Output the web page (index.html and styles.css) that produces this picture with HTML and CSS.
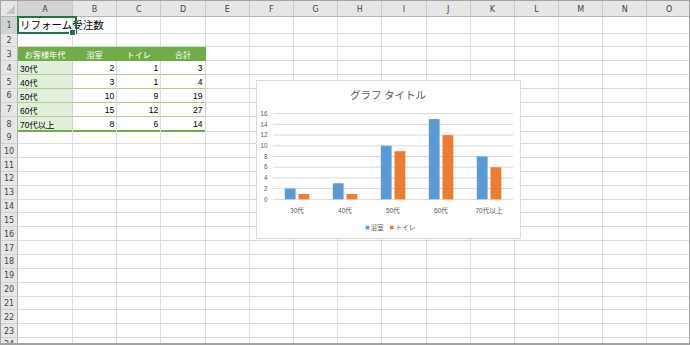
FILE: index.html
```html
<!DOCTYPE html>
<html lang="ja">
<head>
<meta charset="utf-8">
<title>リフォーム受注数</title>
<link rel="stylesheet" href="styles.css">
</head>
<body>
<div class="sheet">
  <div class="row hdr"><b class="corner"></b><b class="on">A</b><b>B</b><b>C</b><b>D</b><b>E</b><b>F</b><b>G</b><b>H</b><b>I</b><b>J</b><b>K</b><b>L</b><b>M</b><b>N</b><b>O</b></div>
  <div class="row r1"><b class="on">1</b><i class="sel">リフォーム受注数</i><i></i><i></i><i></i><i></i><i></i><i></i><i></i><i></i><i></i><i></i><i></i><i></i><i></i><i></i></div>
  <div class="row"><b>2</b><i></i><i></i><i></i><i></i><i></i><i></i><i></i><i></i><i></i><i></i><i></i><i></i><i></i><i></i><i></i></div>
  <div class="row"><b>3</b><i class="th">お客様年代</i><i class="th">浴室</i><i class="th">トイレ</i><i class="th">合計</i><i></i><i></i><i></i><i></i><i></i><i></i><i></i><i></i><i></i><i></i><i></i></div>
  <div class="row"><b>4</b><i class="ca">30代</i><i class="n">2</i><i class="n">1</i><i class="n">3</i><i></i><i></i><i></i><i></i><i></i><i></i><i></i><i></i><i></i><i></i><i></i></div>
  <div class="row"><b>5</b><i class="ca">40代</i><i class="n">3</i><i class="n">1</i><i class="n">4</i><i></i><i></i><i></i><i></i><i></i><i></i><i></i><i></i><i></i><i></i><i></i></div>
  <div class="row"><b>6</b><i class="ca">50代</i><i class="n">10</i><i class="n">9</i><i class="n">19</i><i></i><i></i><i></i><i></i><i></i><i></i><i></i><i></i><i></i><i></i><i></i></div>
  <div class="row"><b>7</b><i class="ca">60代</i><i class="n">15</i><i class="n">12</i><i class="n">27</i><i></i><i></i><i></i><i></i><i></i><i></i><i></i><i></i><i></i><i></i><i></i></div>
  <div class="row"><b>8</b><i class="ca last">70代以上</i><i class="n last">8</i><i class="n last">6</i><i class="n last">14</i><i></i><i></i><i></i><i></i><i></i><i></i><i></i><i></i><i></i><i></i><i></i></div>
  <div class="row"><b>9</b><i></i><i></i><i></i><i></i><i></i><i></i><i></i><i></i><i></i><i></i><i></i><i></i><i></i><i></i><i></i></div>
  <div class="row"><b>10</b><i></i><i></i><i></i><i></i><i></i><i></i><i></i><i></i><i></i><i></i><i></i><i></i><i></i><i></i><i></i></div>
  <div class="row"><b>11</b><i></i><i></i><i></i><i></i><i></i><i></i><i></i><i></i><i></i><i></i><i></i><i></i><i></i><i></i><i></i></div>
  <div class="row"><b>12</b><i></i><i></i><i></i><i></i><i></i><i></i><i></i><i></i><i></i><i></i><i></i><i></i><i></i><i></i><i></i></div>
  <div class="row"><b>13</b><i></i><i></i><i></i><i></i><i></i><i></i><i></i><i></i><i></i><i></i><i></i><i></i><i></i><i></i><i></i></div>
  <div class="row"><b>14</b><i></i><i></i><i></i><i></i><i></i><i></i><i></i><i></i><i></i><i></i><i></i><i></i><i></i><i></i><i></i></div>
  <div class="row"><b>15</b><i></i><i></i><i></i><i></i><i></i><i></i><i></i><i></i><i></i><i></i><i></i><i></i><i></i><i></i><i></i></div>
  <div class="row"><b>16</b><i></i><i></i><i></i><i></i><i></i><i></i><i></i><i></i><i></i><i></i><i></i><i></i><i></i><i></i><i></i></div>
  <div class="row"><b>17</b><i></i><i></i><i></i><i></i><i></i><i></i><i></i><i></i><i></i><i></i><i></i><i></i><i></i><i></i><i></i></div>
  <div class="row"><b>18</b><i></i><i></i><i></i><i></i><i></i><i></i><i></i><i></i><i></i><i></i><i></i><i></i><i></i><i></i><i></i></div>
  <div class="row"><b>19</b><i></i><i></i><i></i><i></i><i></i><i></i><i></i><i></i><i></i><i></i><i></i><i></i><i></i><i></i><i></i></div>
  <div class="row"><b>20</b><i></i><i></i><i></i><i></i><i></i><i></i><i></i><i></i><i></i><i></i><i></i><i></i><i></i><i></i><i></i></div>
  <div class="row"><b>21</b><i></i><i></i><i></i><i></i><i></i><i></i><i></i><i></i><i></i><i></i><i></i><i></i><i></i><i></i><i></i></div>
  <div class="row"><b>22</b><i></i><i></i><i></i><i></i><i></i><i></i><i></i><i></i><i></i><i></i><i></i><i></i><i></i><i></i><i></i></div>
  <div class="row"><b>23</b><i></i><i></i><i></i><i></i><i></i><i></i><i></i><i></i><i></i><i></i><i></i><i></i><i></i><i></i><i></i></div>
  <div class="row"><b>24</b><i></i><i></i><i></i><i></i><i></i><i></i><i></i><i></i><i></i><i></i><i></i><i></i><i></i><i></i><i></i></div>

  <div class="chart">
    <svg class="plot" width="263" height="157" viewBox="0 0 263 157">
      <text class="title" x="131" y="18" text-anchor="middle">グラフ タイトル</text>
      <g class="grid">
        <line x1="16" y1="32.7" x2="256" y2="32.7"/>
        <line x1="16" y1="43.4" x2="256" y2="43.4"/>
        <line x1="16" y1="54.1" x2="256" y2="54.1"/>
        <line x1="16" y1="64.8" x2="256" y2="64.8"/>
        <line x1="16" y1="75.5" x2="256" y2="75.5"/>
        <line x1="16" y1="86.2" x2="256" y2="86.2"/>
        <line x1="16" y1="96.9" x2="256" y2="96.9"/>
        <line x1="16" y1="107.6" x2="256" y2="107.6"/>
        <line x1="16" y1="118.3" x2="256" y2="118.3"/>
      </g>
      <g class="ylab" text-anchor="end">
        <text x="10.5" y="34.9">16</text>
        <text x="10.5" y="45.6">14</text>
        <text x="10.5" y="56.3">12</text>
        <text x="10.5" y="67">10</text>
        <text x="10.5" y="77.7">8</text>
        <text x="10.5" y="88.4">6</text>
        <text x="10.5" y="99.1">4</text>
        <text x="10.5" y="109.8">2</text>
        <text x="10.5" y="120.5">0</text>
      </g>
      <g class="b1">
        <rect x="27.8" y="107.6" width="10.8" height="10.7"/>
        <rect x="75.8" y="102.25" width="10.8" height="16.05"/>
        <rect x="123.8" y="64.8" width="10.8" height="53.5"/>
        <rect x="171.8" y="38.05" width="10.8" height="80.25"/>
        <rect x="219.8" y="75.5" width="10.8" height="42.8"/>
      </g>
      <g class="b2">
        <rect x="41.5" y="112.95" width="10.8" height="5.35"/>
        <rect x="89.5" y="112.95" width="10.8" height="5.35"/>
        <rect x="137.5" y="70.15" width="10.8" height="48.15"/>
        <rect x="185.5" y="54.1" width="10.8" height="64.2"/>
        <rect x="233.5" y="86.2" width="10.8" height="32.1"/>
      </g>
      <g class="xlab" text-anchor="middle">
        <text x="40" y="131.5">30代</text>
        <text x="88" y="131.5">40代</text>
        <text x="136" y="131.5">50代</text>
        <text x="184" y="131.5">60代</text>
        <text x="232" y="131.5">70代以上</text>
      </g>
      <g class="legend">
        <rect class="lb1" x="108.7" y="144.7" width="3.6" height="3.6"/>
        <text x="113.5" y="148.8">浴室</text>
        <rect class="lb2" x="133" y="144.7" width="3.6" height="3.6"/>
        <text x="138.5" y="148.8">トイレ</text>
      </g>
    </svg>
  </div>
</div>
</body>
</html>
```

FILE: styles.css
```css
* {
  box-sizing: border-box;
  margin: 0;
  padding: 0;
}

html, body {
  margin: 0;
  width: 690px;
  height: 345px;
  overflow: hidden;
  background: #ffffff;
}

.sheet {
  position: relative;
  width: 690px;
  height: 345px;
  border: 1px solid #a3a3a3;
  border-bottom-width: 2px;
  overflow: hidden;
  background: #ffffff;
  font-family: "Liberation Sans", "Noto Sans CJK JP", sans-serif;
}

.row {
  display: grid;
  grid-template-columns: 17px 55px repeat(14, 44.2px);
  height: 13.85px;
}

.row > b,
.row > i {
  display: flex;
  align-items: center;
  min-width: 0;
  white-space: nowrap;
  font-style: normal;
  font-weight: normal;
  border-right: 1px solid #dadada;
  border-bottom: 1px solid #dadada;
}

/* row headers */
.row > b {
  justify-content: center;
  background: #e6e6e6;
  border-right-color: #b5b5b5;
  border-bottom-color: #d2d2d2;
  font-family: "DejaVu Sans", sans-serif;
  font-size: 8px;
  color: #444444;
  padding-top: 1px;
}

/* column header row */
.hdr {
  height: 16px;
}

.hdr > b {
  border-right-color: #cacaca;
  border-bottom-color: #b5b5b5;
  font-size: 8px;
}

.hdr > b.corner {
  position: relative;
  border-right-color: #b5b5b5;
}

.hdr > b.corner::after {
  content: "";
  position: absolute;
  right: 2px;
  bottom: 2px;
  border-left: 9px solid transparent;
  border-bottom: 9px solid #c4c4c4;
}

.row > b.on {
  background: #d3d3d3;
  color: #217346;
}

.hdr > b.on {
  color: #2f4f3a;
}

.r1 {
  height: 16.5px;
}

.r1 > b.on {
  border-right-color: #217346;
}

/* selected cell A1 */
.sel {
  position: relative;
  overflow: visible;
  padding-left: 2px;
  font-family: "Noto Sans CJK JP", sans-serif;
  font-size: 10.5px;
  color: #000000;
  z-index: 2;
}

.sel::after {
  content: "";
  position: absolute;
  left: -1px;
  top: -1px;
  width: 56px;
  bottom: -1px;
  border: 2px solid #217346;
}

.sel::before {
  content: "";
  position: absolute;
  left: 51px;
  bottom: -3px;
  width: 5px;
  height: 5px;
  background: #217346;
  border: 1px solid #ffffff;
  z-index: 3;
}

/* table header row */
.row > i.th {
  justify-content: center;
  background: #70ad47;
  color: #ffffff;
  font-family: "Noto Sans CJK JP", sans-serif;
  font-size: 8.2px;
  border-right-color: #70ad47;
  border-bottom-color: #70ad47;
}

/* data rows */
.row > i.ca {
  background: #e2efda;
  border-bottom-color: #a9d08e;
  border-right-color: #d4d4d4;
  padding-left: 2px;
  font-family: "Liberation Sans", "Noto Sans CJK JP", sans-serif;
  font-size: 8.4px;
  color: #000000;
  padding-top: 1px;
}

.row > i.n {
  justify-content: flex-end;
  padding-right: 2px;
  padding-top: 1px;
  border-bottom-color: #a9d08e;
  font-size: 8.6px;
  color: #000000;
}

.row > i.last {
  border-bottom: 2px solid #70ad47;
}

/* chart */
.chart {
  position: absolute;
  left: 255px;
  top: 79px;
  width: 265px;
  height: 159px;
  border: 1px solid #d9d9d9;
  background: #ffffff;
  z-index: 5;
}

.plot {
  display: block;
}

.title {
  font-family: "Noto Sans CJK JP", sans-serif;
  font-size: 10.5px;
  fill: #595959;
}

.grid line {
  stroke: #d9d9d9;
  stroke-width: 1;
}

.ylab text {
  font-family: "Liberation Sans", sans-serif;
  font-size: 6.3px;
  fill: #595959;
}

.xlab text,
.legend text {
  font-family: "Liberation Sans", "Noto Sans CJK JP", sans-serif;
  font-size: 6.6px;
  fill: #595959;
}

.b1 rect,
.lb1 {
  fill: #5b9bd5;
}

.b2 rect,
.lb2 {
  fill: #ed7d31;
}
```
